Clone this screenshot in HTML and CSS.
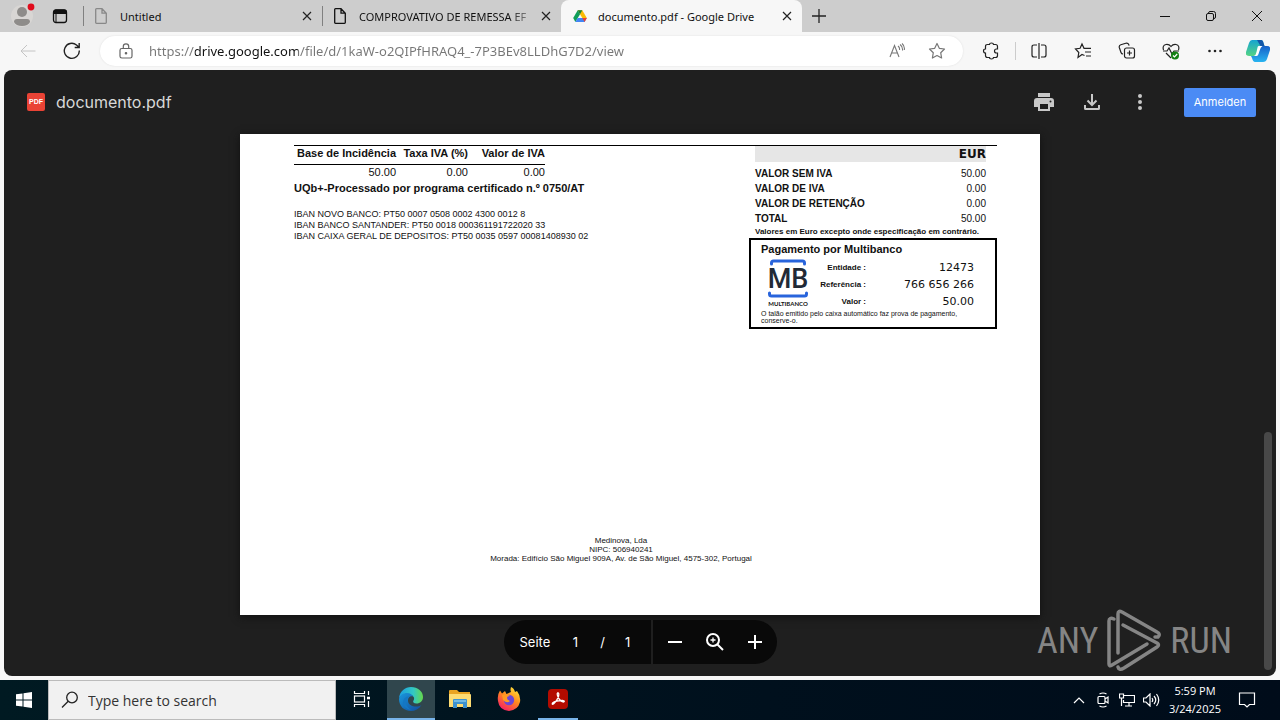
FILE: index.html
```html
<!DOCTYPE html>
<html lang="de">
<head>
<meta charset="utf-8">
<title>documento.pdf - Google Drive</title>
<link rel="stylesheet" href="styles.css">
</head>
<body>
<header class="tabbar">
  <button class="profile" aria-label="Profile"><svg width="24" height="26" viewBox="0 0 24 26"><circle cx="11" cy="13" r="11" fill="#d8d6d4"/><circle cx="11" cy="9" r="5" fill="#8e8c8a"/><path d="M3 19q0-3 3-3h10q3 0 3 3-2 4-8 4t-8-4z" fill="#8e8c8a"/><circle cx="20" cy="4" r="3.4" fill="#e00b1c"/></svg></button>
  <button class="workspaces" aria-label="Tab actions"><svg width="16" height="16" viewBox="0 0 16 16"><rect x="1.5" y="2" width="13" height="12.500" rx="2.500" fill="none" stroke="#111" stroke-width="1.300"/><path d="M1.500 5.500V4q0-2 2-2h9q2 0 2 2v1.500zM4 5v9.500" stroke="#111" fill="#111"/></svg></button>
  <nav class="tabs" aria-label="Tabs">
    <div class="tab"><svg class="doc dim" width="12" height="16" viewBox="0 0 12 16"><path d="M.7 1.500q0-.8.800-.8H7l4.300 4.500v9.300q0 .8-.8.800h-9q-.8 0-.8-.8zM7 .8v4.400h4.300"/></svg><span class="tab-name">Untitled</span><button class="close" aria-label="Close Untitled"><svg width="10" height="10" viewBox="0 0 10 10"><path d="M1 1l8 8M9 1L1 9"/></svg></button></div>
    <div class="tab"><svg class="doc" width="12" height="16" viewBox="0 0 12 16"><path d="M.7 1.500q0-.8.800-.8H7l4.300 4.500v9.300q0 .8-.8.800h-9q-.8 0-.8-.8zM7 .8v4.400h4.300"/></svg><span class="tab-name fade">COMPROVATIVO DE REMESSA EF</span><button class="close" aria-label="Close COMPROVATIVO"><svg width="10" height="10" viewBox="0 0 10 10"><path d="M1 1l8 8M9 1L1 9"/></svg></button></div>
    <div class="tab active"><svg class="drive" width="14" height="14" viewBox="0 0 14 14"><path d="M4.700 1.200h4.600L13.800 9H9.300z" fill="#fbbc04"/><path d="M4.700 1.200L7 5.200 2.400 13 .2 9z" fill="#0f9d58"/><path d="M4.600 9h9.200l-2.200 4H2.400z" fill="#4285f4"/><path d="M9.300 9h4.500l-2.200 4z" fill="#ea4335"/><path d="M4.700 1.200h4.600L7 5.200z" fill="#188038"/></svg><span class="tab-name">documento.pdf - Google Drive</span><button class="close" aria-label="Close documento.pdf"><svg width="10" height="10" viewBox="0 0 10 10"><path d="M1 1l8 8M9 1L1 9"/></svg></button></div>
  </nav>
  <button class="new-tab" aria-label="New tab"><svg width="14" height="14" viewBox="0 0 14 14"><path d="M7 0v14M0 7h14" stroke="#222" stroke-width="1.300"/></svg></button>
  <div class="window-buttons">
    <button aria-label="Minimize"><svg width="10" height="10" viewBox="0 0 10 10"><path d="M0 5.500h10"/></svg></button>
    <button aria-label="Restore"><svg width="10" height="10" viewBox="0 0 10 10"><rect x=".5" y="2.500" width="7" height="7" rx="1.500"/><path d="M2.500 2q.2-1.500 1.500-1.500h3.500q2 0 2 2V6q0 1.500-1.500 1.500"/></svg></button>
    <button aria-label="Close window"><svg width="10" height="10" viewBox="0 0 10 10"><path d="M0 0l10 10M10 0L0 10"/></svg></button>
  </div>
</header>

<div class="toolbar">
  <button class="back" aria-label="Back"><svg width="16" height="16" viewBox="0 0 16 16" fill="none" stroke="#c4c4c4"><path d="M15.500 8H1M7 2L1 8l6 6"/></svg></button>
  <button class="reload" aria-label="Reload"><svg width="18" height="18" viewBox="0 0 18 18" fill="none" stroke="#222" stroke-width="1.400"><path d="M16.300 8.500A7.500 7.500 0 1 1 13.500 3L16 5.300M16.200 1v4.500h-4.500"/></svg></button>
  <form class="address">
    <svg width="14" height="16" viewBox="0 0 14 16" fill="none" stroke="#666" stroke-width="1.200"><rect x="1" y="5.500" width="12" height="9.500" rx="1.800"/><path d="M4.300 5.500V3.500a2.700 2.700 0 0 1 5.400 0v2"/><circle cx="7" cy="10.300" r=".7" fill="#666"/></svg>
    <input class="url" type="text" aria-label="Address" value="https://drive.google.com/file/d/1kaW-o2QIPfHRAQ4_-7P3BEv8LLDhG7D2/view" spellcheck="false">
    <button type="button" aria-label="Read aloud"><svg width="16" height="16" viewBox="0 0 16 16" fill="none" stroke="#777" stroke-width="1.100"><path d="M1 14L5.500 2.500 10 14M2.500 10h6M9 3q2 1.500 1.500 4M11 1.500q3 2 2.500 6M13 .5q3 2.500 2.300 6.500"/></svg></button>
    <button type="button" aria-label="Favorite"><svg width="18" height="18" viewBox="0 0 18 18" fill="none" stroke="#777" stroke-width="1.200" stroke-linejoin="round"><path d="M9 1.500l2.300 4.800 5.200.7-3.800 3.700.9 5.300L9 13.500 4.400 16l.9-5.300L1.500 7l5.200-.7z"/></svg></button>
  </form>
  <div class="tools">
    <button aria-label="Extensions"><svg width="18" height="18" viewBox="0 0 18 18"><path d="M5.500 2.500h2q0-1.500 2-1.500t2 1.500h2q2 0 2 2V7h-1q-2 0-2 2t2 2h1v2.500q0 2-2 2h-2q0 1.500-2 1.500t-2-1.500h-2q-2 0-2-2V11q-2 0-2-2t2-2V4.500q0-2 2-2z"/></svg></button>
    <button class="split" aria-label="Split screen"><svg width="18" height="18" viewBox="0 0 18 18"><path d="M7 3H4Q2 3 2 5v8q0 2 2 2h3M11 3h3q2 0 2 2v8q0 2-2 2h-3M9 1v16"/></svg></button>
    <button aria-label="Favorites"><svg width="18" height="18" viewBox="0 0 18 18"><path d="M10.500 13.500L8 12.500l-4 3 .8-5L1.500 7l4.600-.7L8 2l2 4.300h7M11 10h6M12 14h5"/></svg></button>
    <button aria-label="Collections"><svg width="18" height="18" viewBox="0 0 18 18"><rect x="6.500" y="6" width="10" height="10" rx="2"/><path d="M11.500 8.500v5M9 11h5M5 12q-1.500 0-2-1.500L1.300 5.500q-.5-2 1.500-2.700l5-1.600q2-.6 2.800 1.100l.5 1.300"/></svg></button>
    <button aria-label="Browser essentials"><svg width="18" height="18" viewBox="0 0 18 18"><path d="M1.500 8Q0 3.500 4 2.500q3-.5 5 2 2-2.500 5-2Q18 3.500 16.500 8M1 9h4l2-3 3 6 2-3h5M4 11l5 5"/><circle cx="13" cy="13.500" r="4" fill="#148014" stroke="none"/><path d="M11 13.500l1.500 1.500 2.700-3" stroke="#fff"/></svg></button>
    <button aria-label="More"><svg width="18" height="18" viewBox="0 0 18 18"><g fill="#222" stroke="none"><circle cx="3.500" cy="9" r="1.300"/><circle cx="9" cy="9" r="1.300"/><circle cx="14.500" cy="9" r="1.300"/></g></svg></button>
    <button class="copilot" aria-label="Copilot"><svg width="24" height="24" viewBox="0 0 24 24"><defs><linearGradient id="cp" x2="0" y2="1"><stop stop-color="#16a4d0"/><stop offset="1" stop-color="#54d484"/></linearGradient><linearGradient id="cq" x2="0" y2="1"><stop stop-color="#1660c8"/><stop offset="1" stop-color="#28b4f0"/></linearGradient></defs><path d="M6 1h9q2 0 2.500 3l1 3h-4q-2 0-3 4l-1 4q-1 2-3 2H3q-4 0-3-4L3 4q1-3 3-3z" fill="url(#cp)" stroke="none"/><path d="M18 7h3q4 0 3 4l-3 9q-1 3-4 3H9q-2 0-3-4l-1-2h3q2 0 3-3l1-4q1-3 3-3z" fill="url(#cq)" stroke="none"/><path d="M12.500 7h4q-2 1-3 5l-1 3q-.5 2-2 2H8q2-1 2.500-4l.7-3q.3-3 1.300-3z" fill="#fff" stroke="none"/><path d="M11 1h4q2 0 2.500 3l1 3h-4z" fill="#1255a8" stroke="none"/></svg></button>
  </div>
</div>

<main class="viewer">
  <div class="viewer-bar">
    <span class="pdf-badge">PDF</span>
    <h1 class="file-name">documento.pdf</h1>
    <div class="viewer-actions">
      <button aria-label="Print"><svg width="24" height="24" viewBox="0 0 24 24" fill="#c8c8c8"><path d="M6 3h12v4H6zM5 8h14a3 3 0 0 1 3 3v6h-4v4H6v-4H2v-6a3 3 0 0 1 3-3zm3 6v5h8v-5z" fill-rule="evenodd"/><circle cx="18.500" cy="11.500" r="1" fill="#1f1f1f"/></svg></button>
      <button aria-label="Download"><svg width="24" height="24" viewBox="0 0 24 24" fill="none" stroke="#c8c8c8" stroke-width="2"><path d="M12 4v11M7.500 10.500L12 15l4.500-4.500M5 15v3.500q0 .5.500.5h13q.5 0 .5-.5V15"/></svg></button>
      <button aria-label="More actions"><svg width="24" height="24" viewBox="0 0 24 24" fill="#c8c8c8"><circle cx="12" cy="6" r="2"/><circle cx="12" cy="12" r="2"/><circle cx="12" cy="18" r="2"/></svg></button>
    </div>
    <button class="sign-in">Anmelden</button>
  </div>

  <article class="paper">
    <div class="summary">
      <section class="taxes">
        <table class="tax-table">
          <thead><tr><th>Base de Incidência</th><th>Taxa IVA (%)</th><th>Valor de IVA</th></tr></thead>
          <tbody><tr><td>50.00</td><td>0.00</td><td>0.00</td></tr></tbody>
        </table>
        <p class="certified">UQb+-Processado por programa certificado n.º 0750/AT</p>
        <p class="ibans">IBAN NOVO BANCO: PT50 0007 0508 0002 4300 0012 8<br>IBAN BANCO SANTANDER: PT50 0018 000361191722020 33<br>IBAN CAIXA GERAL DE DEPOSITOS: PT50 0035 0597 00081408930 02</p>
      </section>
      <section class="totals">
        <table class="totals-table">
          <thead><tr><th colspan="2">EUR</th></tr></thead>
          <tbody>
            <tr><th>VALOR SEM IVA</th><td>50.00</td></tr>
            <tr><th>VALOR DE IVA</th><td>0.00</td></tr>
            <tr><th>VALOR DE RETENÇÃO</th><td>0.00</td></tr>
            <tr><th>TOTAL</th><td>50.00</td></tr>
          </tbody>
        </table>
        <p class="note">Valores em Euro excepto onde especificação em contrário.</p>
        <div class="payment">
          <h2>Pagamento por Multibanco</h2>
          <div class="payment-body">
            <div class="mb-logo">
              <svg width="42" height="40" viewBox="0 0 42 40"><g fill="none" stroke="#2864dc" stroke-width="3" stroke-linecap="round"><path d="M4.500 5V4q0-2 2-2h29q2 0 2 2v1M2.500 34v1q0 2 2 2h33q2 0 2-2v-1"/></g><text x="21" y="29" text-anchor="middle">MB</text></svg>
              <span>MULTIBANCO</span>
            </div>
            <table class="payment-table">
              <tr><th>Entidade :</th><td>12473</td></tr>
              <tr><th>Referência :</th><td>766 656 266</td></tr>
              <tr><th>Valor :</th><td>50.00</td></tr>
            </table>
          </div>
          <p class="receipt">O talão emitido pelo caixa automático faz prova de pagamento, conserve-o.</p>
        </div>
      </section>
    </div>
    <footer class="company">Medinova, Lda<br>NIPC: 506940241<br>Morada: Edifício São Miguel 909A, Av. de São Miguel, 4575-302, Portugal</footer>
  </article>

  <div class="pager">
    <div class="page-count"><label for="page">Seite</label><input id="page" type="text" value="1"><span>/</span><span class="total">1</span></div>
    <div class="zoom">
      <button aria-label="Zoom out"><svg width="24" height="24" viewBox="0 0 24 24"><path d="M5 12h14"/></svg></button>
      <button aria-label="Reset zoom"><svg width="24" height="24" viewBox="0 0 24 24"><circle cx="10" cy="10" r="6"/><path d="M14.500 14.500L20 20"/><path d="M7.500 10h5M10 7.500v5" stroke-width="1.300"/></svg></button>
      <button aria-label="Zoom in"><svg width="24" height="24" viewBox="0 0 24 24"><path d="M5 12h14M12 5v14"/></svg></button>
    </div>
  </div>
  <div class="scroll-thumb"></div>
  <div class="watermark"><span>ANY</span><svg width="56" height="64" viewBox="0 0 56 64"><g fill="none" stroke="#858585" stroke-width="3.500" stroke-linecap="round" stroke-linejoin="round"><path d="M8 10Q3 8 3 12v43q0 3 3 1l35-21"/><path d="M12 44V5q0-4 4-2l35 20q4 2 1 5l-3 0"/><path d="M17 16l34 18q3 2 0 4L18 59q-5 3-6-1"/></g></svg><span>RUN</span></div>
</main>

<footer class="taskbar">
  <button class="start" aria-label="Start"><svg width="16" height="16" viewBox="0 0 16 16" fill="#fff"><path d="M0 2.300L6.500 1.400V7.500H0zM7.500 1.200L16 0v7.500H7.500zM0 8.500h6.500v6.100L0 13.700zM7.500 8.500H16V16l-8.500-1.200z"/></svg></button>
  <div class="search"><svg width="18" height="18" viewBox="0 0 18 18" fill="none" stroke="#222" stroke-width="1.300"><circle cx="11" cy="6.500" r="5.300"/><path d="M7.200 10.300L1 16.500"/></svg><input type="text" aria-label="Search" placeholder="Type here to search"></div>
  <div class="apps">
    <button class="app" aria-label="Task view"><svg width="18" height="18" viewBox="0 0 18 18" fill="none" stroke="#fff" stroke-width="1.200"><path d="M1.500 1v2.500h10V1M1.500 17v-2.500h10V17M15.500 1v4M15.500 11v6"/><rect x="1.500" y="6" width="10" height="6"/><path d="M14 8h3" stroke-width="2.500"/></svg></button>
    <button class="app current" aria-label="Microsoft Edge"><svg width="24" height="24" viewBox="0 0 24 24"><defs><linearGradient id="eg"><stop stop-color="#1b9de2"/><stop offset=".6" stop-color="#32c8c4"/><stop offset="1" stop-color="#66d84a"/></linearGradient><linearGradient id="eb" x2="1" y2="1"><stop stop-color="#1997dd"/><stop offset="1" stop-color="#124c9c"/></linearGradient></defs><path d="M0 11C1 4 6 0 12 0c7 0 12 4.500 12 10 0 4-3 6.500-6.500 6.500-3 0-4-1.500-3-3 2-3-1-6-5-6C5 7.500 1.500 9 0 11z" fill="url(#eg)"/><path d="M0 12c1-4 4-6 8-6 3 0 5 1.500 6 3.500-3-1-5 1-5 4 0 4 4 6 8 6 2 0 4-.5 5.500-1.500C20 22 16 24 12 24 5 24 0 19 0 12z" fill="url(#eb)"/><path d="M9 11c-3 2-3 8 3 12-5-1-8-4-8-7.500C4 12 6 10 10 9z" fill="#1477c4"/></svg></button>
    <button class="app" aria-label="File Explorer"><svg width="22" height="20" viewBox="0 0 22 20"><path d="M0 2q0-1 1-1h7l2 2h11v4H0z" fill="#e9a321"/><path d="M0 5h21q1 0 1 1v12H0z" fill="#fddb72"/><path d="M4 11q0-1 1-1h12q1 0 1 1v8h-4v-4H8v4H4z" fill="#3c91cf"/><path d="M5 11h12v2H5z" fill="#71bae5"/></svg></button>
    <button class="app" aria-label="Firefox"><svg width="24" height="24" viewBox="0 0 24 24"><defs><linearGradient id="ff" x1=".8" y1="0" x2=".2" y2="1"><stop stop-color="#ffe53a"/><stop offset=".45" stop-color="#ff8a1e"/><stop offset="1" stop-color="#f5156c"/></linearGradient></defs><path d="M3 3.500l2 3 3-2.500 1.500 3L14 5q-1-2 0-5 3 1 4 5l2-1q4 5 3 11-2 8-11 9Q2 23 1 14 0 8 3 3.500z" fill="url(#ff)"/><circle cx="12" cy="13" r="5.200" fill="#6b46d6"/><path d="M5 8q5-2 8 1-3 0-3 2t3 3q-3 3-7-1z" fill="#ff9a22"/></svg></button>
    <button class="app running" aria-label="Adobe Acrobat"><svg width="22" height="22" viewBox="0 0 22 22"><rect x="1" y="1" width="20" height="20" rx="4" fill="#b30b00"/><path d="M10.500 5q2-.5 1 3.500-1.500 4.500-5 7.500-2 .8-1-1 3-2.500 10-2.500 3 .5 1 1.500-4-.5-6-6.500-.7-2 0-2.500z" fill="none" stroke="#fff" stroke-width="1.300"/></svg></button>
  </div>
  <div class="tray">
    <svg width="12" height="8" viewBox="0 0 12 8"><path d="M1 7l5-5 5 5"/></svg>
    <svg width="12" height="16" viewBox="0 0 12 16"><rect x="1" y="4.500" width="7" height="7" rx="1"/><path d="M8 7l3-2v6L8 9M2.500 2q3.500-2 7 0M2.500 14q3.500 2 7 0"/></svg>
    <svg width="16" height="14" viewBox="0 0 16 14"><path d="M5 2.500h10.500v7H4.500V7M10 9.500V13M6 13h7M.5 1h4v4h-4zM2.500 5v8"/></svg>
    <svg width="17" height="14" viewBox="0 0 17 14"><path d="M.5 5h2.500l4-4v12L3 9H.5zM9 5q1.500 2 0 4M11 3q3.500 4 0 8M13.500 1q4.500 6 0 12"/></svg>
  </div>
  <div class="clock"><span>5:59 PM</span><span>3/24/2025</span></div>
  <button class="notices" aria-label="Notifications"><svg width="18" height="18" viewBox="0 0 18 18" fill="none" stroke="#fff" stroke-width="1.200"><path d="M1.500 2h15v11.500h-5L9 16l-2.500-2.500h-5z"/></svg></button>
</footer>
</body>
</html>
```

FILE: styles.css
```css
* { box-sizing: border-box; }

body {
  margin: 0;
  min-height: 100vh;
  display: flex;
  flex-direction: column;
  background: #f7f7f7;
  color: #111;
  font-family: "Open Sans", "Noto Sans", sans-serif;
}

button {
  display: inline-flex;
  align-items: center;
  justify-content: center;
  flex: none;
  margin: 0;
  padding: 0;
  border: 0;
  background: none;
  color: inherit;
  font: inherit;
}

input { min-width: 0; padding: 0; border: 0; background: none; font: inherit; color: inherit; }
svg { display: block; flex: none; }
h1, h2, p { margin: 0; }
table { border-collapse: collapse; }
th, td { padding: 0; }

/* Tab strip */
.tabbar { display: flex; height: 32px; background: #cdcdcd; }
.profile { width: 36px; padding-left: 10px; }
.workspaces { width: 47px; }
.tabs { display: flex; }
.tab {
  display: flex;
  align-items: center;
  width: 239px;
  padding: 0 9px 0 12px;
  background: linear-gradient(#808080, #808080) left center / 1px 20px no-repeat;
  font: 11px "Noto Sans", sans-serif;
}
.tab.active { width: 241px; border-radius: 8px 8px 0 0; background: #f7f7f7; }
.tab .doc { fill: none; stroke: #111; stroke-width: 1.3px; }
.tab .dim { stroke: #888; }
.tab-name { flex: 1; min-width: 0; margin: 0 0 0 13px; white-space: nowrap; }
.tab.active .tab-name { margin-left: 11px; }
.fade { mask-image: linear-gradient(to right, #000 150px, transparent 180px); }
.close { width: 12px; height: 16px; }
.close svg { stroke: #222; stroke-width: 1.2px; }
.new-tab { width: 34px; }
.window-buttons { display: flex; margin-left: auto; }
.window-buttons button { width: 46px; }
.window-buttons svg { fill: none; stroke: #111; }

/* Navigation bar */
.toolbar { display: flex; align-items: center; height: 38px; padding-left: 20px; }
.back { width: 16px; margin-right: 27px; }
.reload { width: 18px; margin-right: 19px; }
.address {
  display: flex;
  flex: 1;
  align-items: center;
  height: 30px;
  padding: 0 17px 0 19px;
  border-radius: 15px;
  background: #fff;
  box-shadow: 0 0 2px #ddd;
}
.address button { margin-left: 23px; }
.url {
  flex: 1;
  margin-left: 16px;
  font: 13px "Noto Sans", sans-serif;
  background: linear-gradient(to right, #767676 46px, #111 46px, #111 149px, #767676 149px);
  -webkit-background-clip: text;
  background-clip: text;
  color: transparent;
}
.tools { display: flex; align-items: center; gap: 26px; padding: 0 10px 0 19px; }
.tools svg { fill: none; stroke: #222; stroke-width: 1.2px; }
.tools .split { padding-left: 14px; margin-left: -11px; border-left: 1px solid #ccc; }
.tools .copilot { margin-left: -4px; }

/* Document viewer */
.viewer {
  position: relative;
  flex: 1;
  margin: 0 4px 4px;
  border-radius: 8px;
  background: #1f1f1f;
}
.viewer-bar { display: flex; align-items: center; height: 64px; padding: 0 20px 0 23px; }
.pdf-badge {
  width: 18px;
  border-radius: 2px;
  background: #ea4335;
  color: #fff;
  font: bold 7px/18px "Liberation Sans", sans-serif;
  text-align: center;
}
.file-name { margin-left: 11px; color: #d8d8d8; font: 400 16px/24px Inter, sans-serif; }
.viewer-actions { display: flex; gap: 24px; margin-left: auto; margin-right: 32px; }
.sign-in {
  width: 72px;
  height: 29px;
  border-radius: 2px;
  background: #4b8bf5;
  color: #fff;
  font: 11px Inter, sans-serif;
}

/* Invoice page */
.paper {
  display: flex;
  flex-direction: column;
  justify-content: space-between;
  width: 800px;
  max-width: 100%;
  min-height: 481px;
  margin: 0 auto;
  padding: 11px 43px 52px 54px;
  background: #fff;
  box-shadow: 0 2px 8px #111;
  font-family: "Liberation Sans", sans-serif;
}
.summary { display: flex; justify-content: space-between; border-top: 1px solid #000; }
.tax-table { text-align: right; line-height: 15px; font-size: 11px; }
.tax-table thead { border-bottom: 1px solid #000; }
.tax-table th { height: 18px; padding-bottom: 3px; white-space: nowrap; }
.tax-table th:first-child { width: 102px; }
.tax-table th:nth-child(2) { width: 72px; }
.tax-table th:last-child { width: 77px; }
.certified { font-size: 11px; font-weight: bold; line-height: 16px; }
.ibans { margin-top: 13px; font-size: 9px; line-height: 11px; }
.totals { width: 248px; }
.totals-table { width: 231px; margin: 0 0 0 6px; font-size: 10px; line-height: 15px; text-align: left; }
.totals-table thead th {
  height: 16px;
  background: #e6e6e6;
  font: bold 12px/16px "DejaVu Sans", sans-serif;
  text-align: right;
}
.totals-table tbody::before { content: ""; display: table-row; height: 4px; }
.totals-table td { text-align: right; }
.note { margin-left: 6px; font-size: 8px; font-weight: bold; line-height: 12px; white-space: nowrap; }
.payment { padding: 0 10px 3px; border: 2px solid #000; }
.payment h2 { font-size: 11px; line-height: 19px; }
.payment-body { display: flex; justify-content: space-between; padding-right: 11px; }
.mb-logo { display: flex; flex-direction: column; align-items: center; margin-left: 6px; font: bold 6px/10px Lato, sans-serif; }
.mb-logo text { fill: #222a36; font: 500 27px Roboto, sans-serif; }
.payment-table { line-height: 17px; text-align: right; }
.payment-table th { padding-right: 38px; font-size: 8px; }
.payment-table td { font: 11px/17px "DejaVu Sans", sans-serif; }
.receipt { font-size: 7px; line-height: 7px; }
.company { margin-right: 49px; font-size: 8px; line-height: 9px; text-align: center; }

/* Floating controls */
.pager {
  display: flex;
  width: max-content;
  height: 44px;
  margin: 5px auto 0;
  border-radius: 22px;
  background: #090909;
  color: #fff;
  font: 13px Inter, sans-serif;
}
.page-count { display: flex; align-items: center; width: 149px; padding-left: 16px; border-right: 2px solid #1f1f1f; }
.page-count input { width: 36px; height: 22px; margin: 0 7px; text-align: center; }
.page-count .total { margin-left: 20px; }
.zoom { display: flex; gap: 16px; padding: 0 10px; }
.zoom svg { fill: none; stroke: #fff; stroke-width: 2px; }
.scroll-thumb { position: absolute; right: 4px; bottom: 6px; width: 8px; height: 238px; border-radius: 4px; background: #484848; }
.watermark {
  position: absolute;
  right: 44px;
  bottom: 3px;
  display: flex;
  align-items: center;
  gap: 8px;
  color: #858585;
  font: 36px "Liberation Sans Narrow", "Roboto Condensed", Roboto, sans-serif;
}

/* Taskbar */
.taskbar { display: flex; height: 40px; background: linear-gradient(to right, #001a22, #00101d 60%, #000c1a); color: #fff; }
.start { width: 48px; }
.search { display: flex; align-items: center; width: 288px; padding-left: 12px; border: 1px solid #bbb; background: #f1f1f1; }
.search input { flex: 1; margin-left: 9px; color: #222; font-size: 14px; }
.search input::placeholder { color: #333; opacity: 1; }
.apps { display: flex; gap: 1px; padding-left: 2px; }
.app { width: 48px; border-bottom: 2px solid transparent; }
.current { background: #30464d; border-color: #78b4ea; }
.running { width: 40px; margin-left: 4px; border-color: #78b4ea; }
.tray { display: flex; align-items: center; gap: 12px; margin-left: auto; }
.tray svg { fill: none; stroke: #fff; stroke-width: 1.2px; }
.tray svg:nth-child(3) { margin-left: -2px; }
.tray svg:nth-child(4) { margin-left: -4px; }
.clock { display: flex; flex-direction: column; justify-content: center; width: 70px; font-size: 11px; line-height: 18px; text-align: center; }
.notices { width: 34px; margin-right: 16px; }
```
